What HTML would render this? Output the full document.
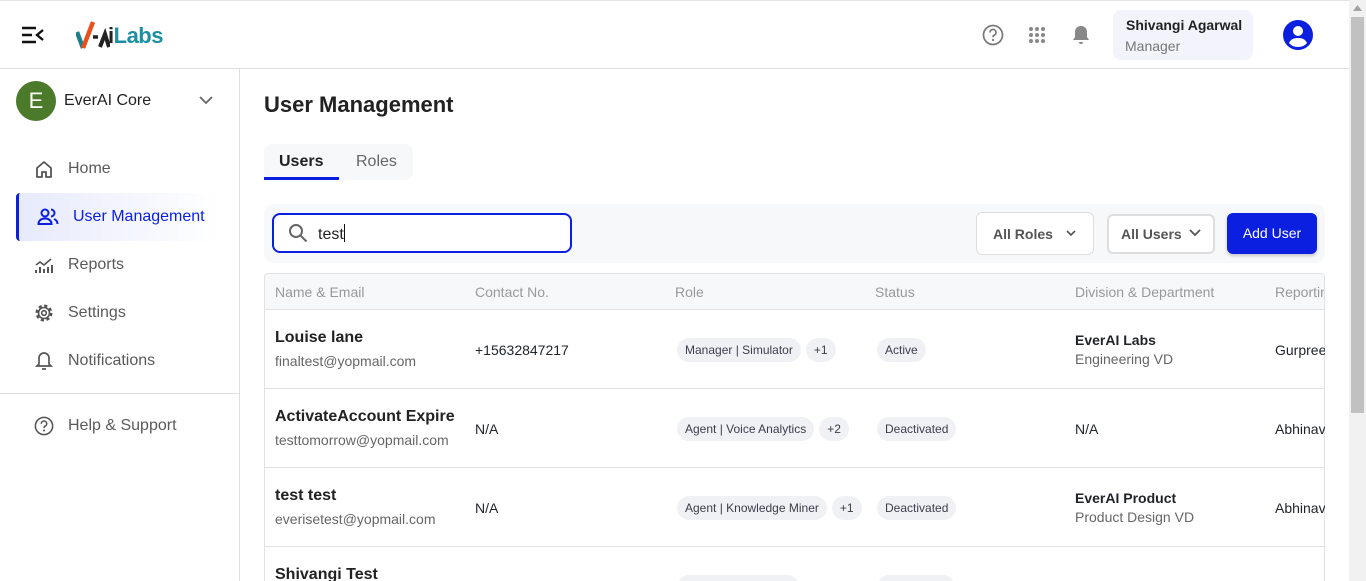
<!DOCTYPE html>
<html style="overflow:hidden;height:581px"><head><meta charset="utf-8"><style>
*{box-sizing:border-box;margin:0;padding:0}
body{width:1366px;height:581px;overflow:hidden;font-family:"Liberation Sans",sans-serif;background:#fff;position:relative;color:#1f2328}
.abs{position:absolute}
.hdr{left:0;top:0;width:1349px;height:69px;border-bottom:1px solid #dedede;border-top:1px solid #e5e5e5}
.side{left:0;top:69px;width:240px;height:512px;border-right:1px solid #dedede}
.nav{position:absolute;left:34px;font-size:16px;color:#5a5a5a;display:flex;align-items:center}
.nav svg{margin-right:14px}
.sb{left:1349px;top:0;width:17px;height:581px;background:#f1f1f1}
.thumb{left:1351px;top:17px;width:13px;height:396px;background:#c1c1c1}
.pill{display:inline-block;background:#f0f1f5;border-radius:12px;padding:0 8px;height:24px;line-height:24px;font-size:12px;color:#3a3f4a;margin-right:5px}
.row{position:absolute;left:265px;width:1060px;height:79px;border-bottom:1px solid #e2e2e2}
.c{position:absolute;font-size:14px}
.nm{font-size:16px;font-weight:bold;color:#222}
.em{font-size:14px;color:#666;margin-top:6px}
</style></head><body>
<div class="abs hdr"></div>
<svg class="abs" style="left:21px;top:26px" width="24" height="18" viewBox="0 0 24 18"><path d="M1 2h14M1 9h10M1 16h14M22 4l-6 5 6 5" stroke="#111" stroke-width="2.4" fill="none"/></svg>
<svg class="abs" style="left:76px;top:20px" width="34" height="30" viewBox="0 0 34 30"><path d="M1 12l6 16" stroke="#1a7f8e" stroke-width="4.5" fill="none"/><path d="M7 28L17 2" stroke="#e8501e" stroke-width="4.5" fill="none"/><path d="M17 17h5" stroke="#222" stroke-width="3.5"/><path d="M24 27l5-13 4 13" stroke="#222" stroke-width="4" fill="none"/></svg>
<div class="abs" style="left:108px;top:23px;font-size:22px;font-weight:bold;letter-spacing:-0.5px;color:#222">i<span style="color:#1c8fa3">Labs</span></div>
<svg class="abs" style="left:982px;top:24px" width="22" height="22" viewBox="0 0 22 22"><circle cx="11" cy="11" r="9.5" fill="none" stroke="#777" stroke-width="1.7"/><path d="M8 8.5a3 3 0 1 1 4 2.8c-.8.4-1 1-1 2" stroke="#777" stroke-width="1.7" fill="none"/><circle cx="11" cy="16" r="1.1" fill="#777"/></svg>
<svg class="abs" style="left:1029px;top:27px" width="16" height="16"><g fill="#888"><circle cx="2" cy="2" r="2"/><circle cx="8" cy="2" r="2"/><circle cx="14" cy="2" r="2"/><circle cx="2" cy="8" r="2"/><circle cx="8" cy="8" r="2"/><circle cx="14" cy="8" r="2"/><circle cx="2" cy="14" r="2"/><circle cx="8" cy="14" r="2"/><circle cx="14" cy="14" r="2"/></g></svg>
<svg class="abs" style="left:1072px;top:25px" width="18" height="20" viewBox="0 0 18 20"><path d="M9 1c-4 0-6 3-6 6v5l-2 3h16l-2-3V7c0-3-2-6-6-6z" fill="#888"/><path d="M7 17a2 2 0 0 0 4 0z" fill="#888"/></svg>
<div class="abs" style="left:1113px;top:10px;width:140px;height:50px;background:#f3f4fb;border-radius:8px"></div>
<div class="abs" style="left:1126px;top:17px;font-size:14px;font-weight:bold;color:#222">Shivangi Agarwal</div>
<div class="abs" style="left:1125px;top:38px;font-size:14px;color:#777">Manager</div>
<svg class="abs" style="left:1283px;top:20px" width="30" height="30" viewBox="0 0 30 30"><circle cx="15" cy="15" r="15" fill="#0a1fe0"/><circle cx="15" cy="11" r="5" fill="#fff"/><path d="M6 23c2-4 5-5 9-5s7 1 9 5c-2 2.5-5 4-9 4s-7-1.5-9-4z" fill="#fff"/></svg>

<div class="abs side"></div>
<div class="abs" style="left:16px;top:81px;width:40px;height:40px;border-radius:50%;background:#4a7a2a;color:#fff;font-size:22px;text-align:center;line-height:40px">E</div>
<div class="abs" style="left:64px;top:92px;font-size:16px;color:#222">EverAI Core</div>
<svg class="abs" style="left:199px;top:96px" width="14" height="9"><path d="M1 1l6 6 6-6" stroke="#666" stroke-width="1.8" fill="none"/></svg>
<div class="nav" style="top:159px"><svg width="20" height="20" viewBox="0 0 20 20"><path d="M3 9l7-6 7 6v9h-5v-5H8v5H3z" fill="none" stroke="#555" stroke-width="1.8" stroke-linejoin="round"/></svg>Home</div>
<div class="abs" style="left:16px;top:193px;width:204px;height:48px;background:linear-gradient(90deg,#e7eafc,#fff);border-left:3px solid #0a1fe0;border-radius:4px 0 0 4px"></div>
<div class="nav" style="top:207px;left:37px;color:#0a1fe0"><svg width="22" height="20" viewBox="0 0 22 20"><circle cx="8" cy="6" r="3.5" fill="none" stroke="#0a1fe0" stroke-width="2"/><path d="M1.5 17c0-3.5 3-5.5 6.5-5.5s6.5 2 6.5 5.5z" fill="none" stroke="#0a1fe0" stroke-width="2"/><path d="M14 2.5a3.5 3.5 0 0 1 0 7M17 12c2 .8 3.5 2.5 3.5 5" fill="none" stroke="#0a1fe0" stroke-width="2"/></svg>User Management</div>
<div class="nav" style="top:255px"><svg width="20" height="20" viewBox="0 0 20 20"><path d="M2 10l4-3 4 3 7-6" fill="none" stroke="#555" stroke-width="1.6"/><path d="M2 18v-3M6 18v-6M10 18v-4M14 18v-6M18 18v-8" stroke="#555" stroke-width="2"/></svg>Reports</div>
<div class="nav" style="top:303px"><svg width="20" height="20" viewBox="0 0 20 20"><circle cx="10" cy="10" r="7" fill="none" stroke="#555" stroke-width="3" stroke-dasharray="3 2.5"/><circle cx="10" cy="10" r="5.5" fill="none" stroke="#555" stroke-width="1.6"/><circle cx="10" cy="10" r="2.3" fill="none" stroke="#555" stroke-width="1.6"/></svg>Settings</div>
<div class="nav" style="top:351px"><svg width="20" height="20" viewBox="0 0 20 20"><path d="M10 2c-3 0-5 2.5-5 5v6l-2 2h14l-2-2V7c0-2.5-2-5-5-5z" fill="none" stroke="#555" stroke-width="1.7"/><path d="M8 18h4" stroke="#555" stroke-width="1.7"/></svg>Notifications</div>
<div class="abs" style="left:0;top:393px;width:240px;border-top:1px solid #dedede"></div>
<div class="nav" style="top:416px"><svg width="20" height="20" viewBox="0 0 22 22"><circle cx="11" cy="11" r="9.5" fill="none" stroke="#555" stroke-width="1.7"/><path d="M8 8.5a3 3 0 1 1 4 2.8c-.8.4-1 1-1 2" stroke="#555" stroke-width="1.7" fill="none"/><circle cx="11" cy="16" r="1.1" fill="#555"/></svg>Help &amp; Support</div>

<div class="abs" style="left:264px;top:92px;font-size:22px;font-weight:bold;color:#222">User Management</div>
<div class="abs" style="left:264px;top:144px;width:149px;height:36px;background:#f7f8fa;border-radius:8px"></div>
<div class="abs" style="left:264px;top:177px;width:75px;height:3px;background:#0a1fe0"></div>
<div class="abs" style="left:279px;top:153px;font-size:16px;font-weight:bold;color:#222">Users</div>
<div class="abs" style="left:356px;top:153px;font-size:16px;color:#666">Roles</div>

<div class="abs" style="left:264px;top:204px;width:1061px;height:59px;background:#f7f8fa;border-radius:10px"></div>
<div class="abs" style="left:272px;top:213px;width:300px;height:40px;border:2px solid #0a1fe0;border-radius:8px;background:#fff"></div>
<svg class="abs" style="left:288px;top:223px" width="20" height="20" viewBox="0 0 20 20"><circle cx="8" cy="8" r="6" fill="none" stroke="#666" stroke-width="2"/><path d="M12.5 12.5l6 6" stroke="#666" stroke-width="2"/></svg>
<div class="abs" style="left:318px;top:224px;font-size:16px;color:#222">test<span style="display:inline-block;width:1px;height:18px;background:#111;vertical-align:-3px"></span></div>
<div class="abs" style="left:976px;top:212px;width:118px;height:43px;border:1px solid #ddd;border-radius:6px;background:#fff"></div>
<div class="abs" style="left:993px;top:226px;font-size:14px;font-weight:bold;color:#555">All Roles</div>
<svg class="abs" style="left:1066px;top:230px" width="10" height="7"><path d="M1 1l4 4 4-4" stroke="#555" stroke-width="1.6" fill="none"/></svg>
<div class="abs" style="left:1107px;top:214px;width:108px;height:40px;border:2px solid #ddd;border-radius:6px;background:#fff"></div>
<div class="abs" style="left:1121px;top:226px;font-size:14px;font-weight:bold;color:#555">All Users</div>
<svg class="abs" style="left:1189px;top:229px" width="12" height="8"><path d="M1 1l5 5 5-5" stroke="#555" stroke-width="1.8" fill="none"/></svg>
<div class="abs" style="left:1227px;top:213px;width:90px;height:41px;background:#0a1fe0;border-radius:6px;color:#fff;font-size:14px;text-align:center;line-height:41px;box-shadow:0 2px 3px rgba(0,0,0,.2)">Add User</div>

<div class="abs" style="left:264px;top:273px;width:1061px;height:308px;border:1px solid #e2e2e2;border-bottom:none;border-radius:4px 4px 0 0;overflow:hidden">
<div style="height:36px;background:#f7f8fa;border-bottom:1px solid #e2e2e2;font-size:14px;color:#999;position:relative">
<span class="c" style="left:10px;top:10px">Name &amp; Email</span><span class="c" style="left:210px;top:10px">Contact No.</span><span class="c" style="left:410px;top:10px">Role</span><span class="c" style="left:610px;top:10px">Status</span><span class="c" style="left:810px;top:10px">Division &amp; Department</span><span class="c" style="left:1010px;top:10px;white-space:nowrap">Reporting</span></div>
</div>

<div class="row" style="top:310px">
<div class="c" style="left:10px;top:19px"><div class="nm">Louise lane</div><div class="em">finaltest@yopmail.com</div></div>
<div class="c" style="left:210px;top:32px">+15632847217</div>
<div class="c" style="left:412px;top:28px"><span class="pill">Manager | Simulator</span><span class="pill">+1</span></div>
<div class="c" style="left:612px;top:28px"><span class="pill">Active</span></div>
<div class="c" style="left:810px;top:22px"><div style="font-weight:bold;font-size:14px">EverAI Labs</div><div style="color:#666;margin-top:3px">Engineering VD</div></div>
<div class="c" style="left:1010px;top:32px;white-space:nowrap;width:50px;overflow:hidden">Gurpreet</div>
</div>
<div class="row" style="top:389px">
<div class="c" style="left:10px;top:19px"><div class="nm">ActivateAccount Expire</div><div class="em">testtomorrow@yopmail.com</div></div>
<div class="c" style="left:210px;top:32px">N/A</div>
<div class="c" style="left:412px;top:28px"><span class="pill">Agent | Voice Analytics</span><span class="pill">+2</span></div>
<div class="c" style="left:612px;top:28px"><span class="pill">Deactivated</span></div>
<div class="c" style="left:810px;top:32px">N/A</div>
<div class="c" style="left:1010px;top:32px;white-space:nowrap;width:50px;overflow:hidden">Abhinav</div>
</div>
<div class="row" style="top:468px">
<div class="c" style="left:10px;top:19px"><div class="nm">test test</div><div class="em">everisetest@yopmail.com</div></div>
<div class="c" style="left:210px;top:32px">N/A</div>
<div class="c" style="left:412px;top:28px"><span class="pill">Agent | Knowledge Miner</span><span class="pill">+1</span></div>
<div class="c" style="left:612px;top:28px"><span class="pill">Deactivated</span></div>
<div class="c" style="left:810px;top:22px"><div style="font-weight:bold;font-size:14px">EverAI Product</div><div style="color:#666;margin-top:3px">Product Design VD</div></div>
<div class="c" style="left:1010px;top:32px;white-space:nowrap;width:50px;overflow:hidden">Abhinav</div>
</div>
<div class="row" style="top:547px;border:none;height:34px;overflow:hidden">
<div class="c" style="left:10px;top:19px"><div class="nm">Shivangi Test</div></div>
<div class="c" style="left:412px;top:28px"><span class="pill" style="width:122px"></span></div>
<div class="c" style="left:612px;top:28px"><span class="pill" style="width:78px"></span></div>
</div>

<div class="abs sb"></div><div class="abs thumb"></div>
<svg class="abs" style="left:1353px;top:5px" width="9" height="6"><path d="M0 6L4.5 0 9 6z" fill="#a3a3a3"/></svg>
</body></html>
